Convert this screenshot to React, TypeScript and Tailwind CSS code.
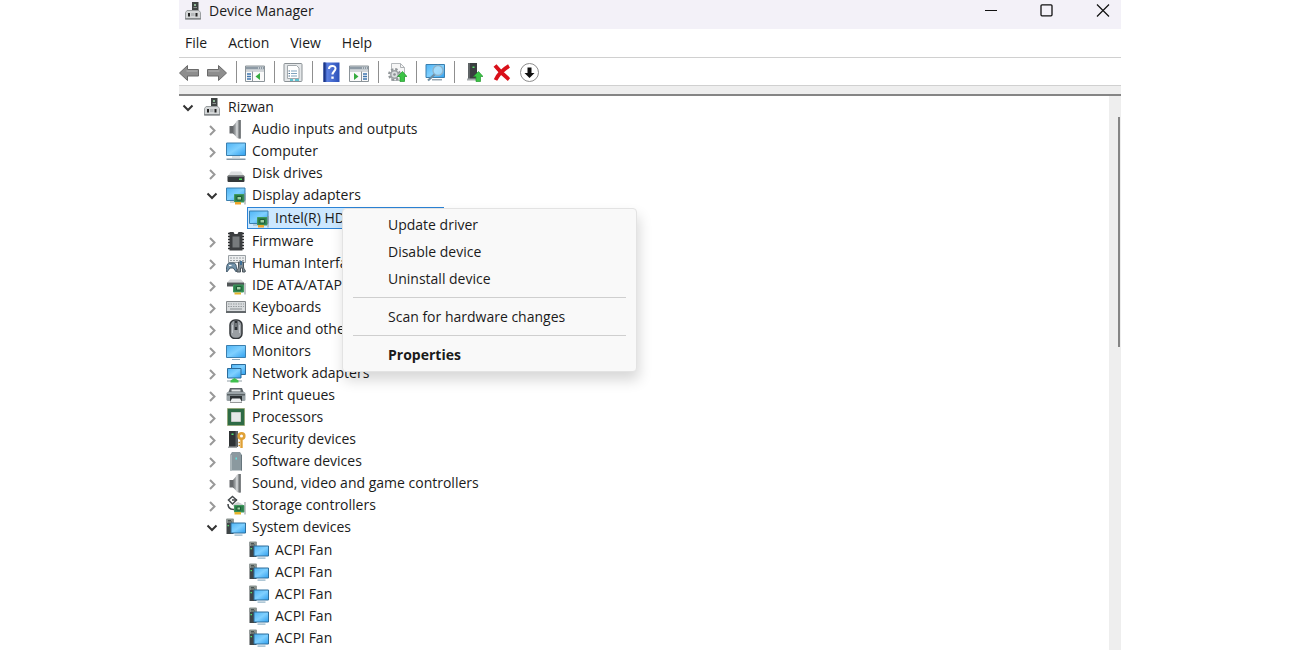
import React, { useState } from "react";

// icons

function Svg({ children }: any) {
  return (
    <svg viewBox="0 0 20 20" className="h-5 w-5 shrink-0" fill="none" aria-hidden="true">
      {children}
    </svg>
  );
}

function Gradients() {
  return (
    <svg className="absolute h-0 w-0" aria-hidden="true">
      <defs>
        <linearGradient id="screen" x1="0" y1="0" x2="1" y2="1">
          <stop offset="0" stopColor="#4fb4f5" />
          <stop offset="0.5" stopColor="#7fd0ff" />
          <stop offset="1" stopColor="#2f9fee" />
        </linearGradient>
        <linearGradient id="metal" x1="0" y1="0" x2="1" y2="0">
          <stop offset="0" stopColor="#6c6f72" />
          <stop offset="0.5" stopColor="#c4c8ca" />
          <stop offset="1" stopColor="#5c5f62" />
        </linearGradient>
        <linearGradient id="help" x1="0" y1="0" x2="1" y2="0">
          <stop offset="0" stopColor="#1f3f9c" />
          <stop offset="0.25" stopColor="#5b7fe0" />
          <stop offset="1" stopColor="#2b50b8" />
        </linearGradient>
      </defs>
    </svg>
  );
}

function RootIcon() {
  return (
    <Svg>
      <path d="M9 1h6.500v9H9z" fill="#3f4443" />
      <path d="M11 3h2v2h-2z" fill="#8fb897" />
      <path d="M10.500 6h3.500v1h-3.500z" fill="#8a8f8e" />
      <path d="M4 9.500h12l1.500 2v6.500H2.500v-6.500z" fill="#d3d6d7" stroke="#9a9ea0" />
      <path d="M5 12h2v3.500H5zM12.500 12h2v3.500h-2z" fill="#222" />
      <path d="M8 12h3.500v3H8z" fill="#b3b7b9" />
      <path d="M2 17h16v1.500H2z" fill="#85898b" />
    </Svg>
  );
}

function AudioIcon() {
  return (
    <Svg>
      <path d="M3.500 7H7v7.500H3.500z" fill="#66696c" />
      <path d="M7 7l5-6h2.500v18.500H12l-5-5z" fill="url(#metal)" />
      <path d="M11 2v16.500" stroke="#d5d8da" strokeWidth="1.200" />
      <path d="M14 1v18.500" stroke="#707477" strokeWidth="1.500" />
    </Svg>
  );
}

function ComputerIcon() {
  return (
    <Svg>
      <path d="M.500 2h19v12.500H.500z" fill="url(#screen)" stroke="#3b7fae" />
      <path d="M6 15.500h8v1H6z" fill="#b5c2cb" />
      <path d="M.500 17.500h19V19H.500z" fill="#8799a6" />
    </Svg>
  );
}

function DiskIcon() {
  return (
    <Svg>
      <path d="M5 8.500h10l3.500 5H1.500z" fill="#dcdedf" />
      <rect x="1.500" y="12.500" width="17" height="6.500" rx="1" fill="#34383a" />
      <path d="M2 13h16v1H2z" fill="#707577" />
      <path d="M13 15.500h3V17h-3z" fill="#49e052" />
    </Svg>
  );
}

function DisplayIcon() {
  return (
    <Svg>
      <path d="M.500 3h18.500v12.500H.500z" fill="url(#screen)" stroke="#3b7fae" />
      <path d="M4 16.500h4v1H4z" fill="#9ab0bd" />
      <path d="M8.500 9.500h9.500v7.500H8.500z" fill="#2c7f4c" stroke="#3f9a5c" />
      <path d="M11 11.500h4.500v3.500H11z" fill="#9ed0a4" stroke="#1d5c34" />
      <path d="M18.500 8h1v11.500h-1z" fill="#8a9296" />
      <path d="M9 17h6v2.500H9z" fill="#f0a52a" />
    </Svg>
  );
}

function FirmwareIcon() {
  return (
    <Svg>
      <path d="M3.500 1h4l1 2h3l1-2h4v18.500h-13z" fill="#3b3e40" />
      <path d="M6.500 5.500h7v11h-7z" fill="#777b7d" />
      <path
        d="M2 2.500h2M2 5.500h2M2 8.500h2M2 11.500h2M2 14.500h2M2 17.500h2M16 2.500h2M16 5.500h2M16 8.500h2M16 11.500h2M16 14.500h2M16 17.500h2"
        stroke="#2c2e30"
        strokeWidth="1.500"
      />
    </Svg>
  );
}

function HumanIcon() {
  return (
    <Svg>
      <path d="M2.500 2.500h17v7h-17z" fill="#eceeef" stroke="#9aa0a4" />
      <path d="M4 5h14M4 7.500h14" stroke="#9aa0a4" strokeDasharray="2 1" />
      <path d="M.800 19c-1-3 0-9 2.500-9h4.500c2.500 0 3.500 6 2.500 9l-3-4H4z" fill="#7393aa" stroke="#41586a" />
      <path d="M3 12.500h2.500" stroke="#fff" strokeWidth="1.200" />
      <path d="M11 19c-1-1 1.500-3 1.500-5V9h5v5c0 2 3 4 1.500 5h-2.500v-4h-2v4z" fill="#7f8b93" stroke="#4b555c" />
      <path d="M14 8h2v4h-2z" fill="#3d6f97" />
    </Svg>
  );
}

function IdeIcon() {
  return (
    <Svg>
      <path d="M4 4.500h11l3 3H1z" fill="#d5d7d8" />
      <path d="M1 7.500h17v4H1z" fill="#515658" />
      <path d="M7.500 10h10v7h-10z" fill="#2c7f4c" stroke="#3f9a5c" />
      <path d="M10.500 11.500H15V15h-4.500z" fill="#9ed0a4" stroke="#1d5c34" />
      <path d="M18.500 8h1v11.500h-1z" fill="#8a9296" />
      <path d="M8.500 17.500h6.500v2H8.500z" fill="#e5b52e" />
    </Svg>
  );
}

function KeyboardIcon() {
  return (
    <Svg>
      <path d="M.500 4.500h19v11H.500z" fill="#d8dbdd" stroke="#85898c" />
      <path d="M2 7h16M2 9.500h16" stroke="#979c9f" strokeDasharray="1.500 1" />
      <path d="M4 12h12" stroke="#8b9093" />
      <path d="M0 14h20v2H0z" fill="#63686b" />
    </Svg>
  );
}

function MouseIcon() {
  return (
    <Svg>
      <rect x="4" y="1" width="12" height="18.500" rx="5" fill="#9a9fa3" stroke="#33373a" strokeWidth="1.500" />
      <path d="M10 2v9" stroke="#2d3134" strokeWidth="3" />
      <path d="M10 4v4" stroke="#b4babd" />
      <path d="M6.500 6v8M13.500 6v8" stroke="#c5cacd" />
    </Svg>
  );
}

function MonitorIcon() {
  return (
    <Svg>
      <path d="M.500 4.500h19v12H.500z" fill="url(#screen)" stroke="#3b7fae" />
      <path d="M6 18h8v1H6z" fill="#8fa9b9" />
    </Svg>
  );
}

function NetworkIcon() {
  return (
    <Svg>
      <path d="M5.500 1.500h14v10h-14z" fill="url(#screen)" stroke="#2c6c9b" />
      <path d="M1.500 5.500h13.500v9.500H1.500z" fill="url(#screen)" stroke="#2c6c9b" />
      <path d="M1 17h15v2H1z" fill="#c7ced2" />
      <path d="M8.500 15l4 2.500v2h-8v-2z" fill="#3fc04d" />
    </Svg>
  );
}

function PrinterIcon() {
  return (
    <Svg>
      <path d="M4 3h12l2 5H2z" fill="#5f666a" />
      <path d="M5.500 4.500h9v2h-9z" fill="#dfe3e4" />
      <rect x=".5" y="7" width="19" height="9" rx="1.500" fill="#9aa3a7" />
      <path d="M1 9h18v1.500H1z" fill="#5b6265" />
      <path d="M4 11h12v6.500H4z" fill="#2c3133" />
      <path d="M6 13.500h8l2 3.500H4z" fill="#eef0f1" />
    </Svg>
  );
}

function ProcessorIcon() {
  return (
    <Svg>
      <path d="M1.500 1.500h17v17h-17z" fill="#2e6b45" />
      <path d="M1.500 1.500h17v17h-17z" stroke="#8d9a55" strokeDasharray="1 1" />
      <path d="M5.500 5.500h9v9h-9z" fill="#e6e8e8" stroke="#c3c9c5" />
    </Svg>
  );
}

function SecurityIcon() {
  return (
    <Svg>
      <path d="M3 2h8v16H3z" fill="#2f3335" />
      <path d="M9.500 2H12v16H9.500z" fill="#5b6163" />
      <path d="M5.500 4.500h2V6h-2z" fill="#54e070" />
      <path d="M2 17.500h9V19H2z" fill="#a2a6a8" />
      <circle cx="15.500" cy="7" r="2.800" stroke="#e0a136" strokeWidth="2.600" />
      <path d="M15.500 10v9" stroke="#e0a136" strokeWidth="2.400" />
      <path d="M14 13.500h-1.500M14 16.500h-1.500" stroke="#c98a22" strokeWidth="1.500" />
    </Svg>
  );
}

function SoftwareIcon() {
  return (
    <Svg>
      <path d="M4 4l2-3h8l2 3v15.500H4z" fill="#8b999f" />
      <path d="M4 4h2v15.500H4z" fill="#aab5b9" />
      <path d="M15 4h1v15.500h-1z" fill="#66757c" />
      <path d="M9.500 6.500h1.500v2H9.500z" fill="#5fe3e0" />
    </Svg>
  );
}

function StorageIcon() {
  return (
    <Svg>
      <path d="M6.500 1.500l4 3.500-4 4-4-4z" stroke="#44494c" strokeWidth="1.500" />
      <path d="M6 5h5M2 9c0 4 2 5.500 6 5.500" stroke="#44494c" strokeWidth="1.500" />
      <path d="M7 9.500l5-2.500 5 2.500v2H7z" fill="#c9cdcf" />
      <path d="M8.500 10.500h9.500v6.500H8.500z" fill="#2c7f4c" stroke="#3f9a5c" />
      <path d="M11 12h3.500v3H11z" fill="#9ed0a4" stroke="#1d5c34" />
      <path d="M18.500 7h1v12.500h-1z" fill="#8a9296" />
      <path d="M8.500 17h6.500v2.500H8.500z" fill="#e5b52e" />
    </Svg>
  );
}

function SystemIcon() {
  return (
    <Svg>
      <path d="M.500 2h7v15h-7z" fill="#3f4547" />
      <path d="M.500 1.500h7V6h-7z" fill="#8b9490" />
      <path d="M2 3.500h3M2 5h4" stroke="#4b5553" />
      <path d="M1.500 8H3v1.200H1.500z" fill="#4fe06b" />
      <path d="M5 6h14.500v10H5z" fill="url(#screen)" stroke="#2f6f9c" />
      <path d="M8.500 17.500h8v1.200h-8z" fill="#8fb0c4" />
    </Svg>
  );
}

// toolbar icons

function ArrowIcon({ flip }: any) {
  return (
    <Svg>
      <path
        d={flip ? "M19.500 11l-8-7.500v4H.500v6.500h11v4.500z" : "M.500 11l8-7.500v4h11v6.500h-11v4.500z"}
        fill="#8e8e8e"
        stroke="#6a6a6a"
        strokeLinejoin="round"
      />
      <path d={flip ? "M1.500 9h11" : "M7.500 9h11"} stroke="#b5b5b5" />
    </Svg>
  );
}

function PaneIcon({ right }: any) {
  return (
    <Svg>
      <path d="M.500 4h19v15.500H.500z" fill="#fafafa" stroke="#8c9499" />
      <path d="M1 4.500h18v3H1z" fill="#8d9aa5" />
      <path d="M13 6h1M15 6h1M17 6h1" stroke="#fff" />
      <path d="M1 9h18" stroke="#a9b1b7" />
      <path d={right ? "M12.500 9.500v9.500" : "M7.500 9.500v9.500"} stroke="#8c9499" />
      <path
        d={right ? "M14 12h4M14 14.500h4M14 17h4" : "M2 12h4M2 14.500h4M2 17h4"}
        stroke="#3e76ae"
        strokeWidth="1.300"
      />
      <path d={right ? "M5 11l4.500 3.500L5 18z" : "M15 11l-4.500 3.500L15 18z"} fill="#36ac3f" />
    </Svg>
  );
}

function PropertiesIcon() {
  return (
    <Svg>
      <rect x="1" y="1.500" width="18" height="18" rx="1" fill="#e4e7e9" stroke="#8b9195" />
      <path d="M4.500 3.500h9l2.500 2.500v10.500H4.500z" fill="#fff" stroke="#a2a8ac" />
      <path d="M8 9h6M8 11.500h6M8 14h6" stroke="#7fa3bd" />
      <path d="M5.500 9H7M5.500 11.500H7M5.500 14H7" stroke="#4c6f8b" />
      <path d="M7 18h3M12 18h4" stroke="#33b8c9" strokeWidth="1.500" />
    </Svg>
  );
}

function HelpIcon() {
  return (
    <Svg>
      <path d="M2.500 .500h16v19.500h-16z" fill="url(#help)" />
      <path d="M2.500 .500h2v19.500h-2z" fill="#1c3789" />
      <path
        d="M8 7c0-4 6.500-4 6.500-.5 0 2.500-3 3-3 6"
        stroke="#fff"
        strokeWidth="2"
      />
      <path d="M10.300 14.500h2.400v2.300h-2.400z" fill="#fff" />
    </Svg>
  );
}

function GreenUp() {
  return <path d="M15.500 9.500l4.500 5h-2.500v5h-4.500v-5h-2.500z" fill="#3bc445" stroke="#24982e" strokeWidth=".7" />;
}

function GearPageIcon() {
  return (
    <Svg>
      <path d="M4.500 1.500h9l4 4v13h-13z" fill="#f6f6f6" stroke="#b5b9bc" />
      <path d="M13.500 1.500v4h4" stroke="#adb1b4" />
      <circle cx="7.500" cy="12.500" r="5.200" stroke="#92979a" strokeWidth="2.500" strokeDasharray="2.300 1.800" />
      <circle cx="7.500" cy="12.500" r="3.700" fill="#dcdfe0" stroke="#9ca1a4" strokeWidth="1.500" />
      <circle cx="7.500" cy="12.500" r="1.300" fill="#8a8f92" />
      <GreenUp />
    </Svg>
  );
}

function ScanIcon() {
  return (
    <Svg>
      <path d="M1 2.500h18.500v13H1z" fill="url(#screen)" stroke="#3b7fae" />
      <path d="M7 17h10v1.500H7z" fill="#9aa9b3" />
      <circle cx="13" cy="8.500" r="5" fill="#b6e2fb" fillOpacity=".7" stroke="#8fb2c8" strokeWidth="1.300" />
      <path d="M9.500 12.500l-6.500 6" stroke="#6e8da2" strokeWidth="2.200" />
    </Svg>
  );
}

function UpdateIcon() {
  return (
    <Svg>
      <path d="M5 1h9v16.500H5z" fill="#3a3e40" />
      <path d="M5 1h2v16.500H5z" fill="#5f6466" />
      <path d="M9.500 4.500h2V6h-2z" fill="#5be06a" />
      <path d="M4 16.500h9v2H4z" fill="#a7abad" />
      <GreenUp />
    </Svg>
  );
}

function RemoveIcon() {
  return (
    <Svg>
      <path d="M4 3.500c4 5 9 10 14 14M18 4C12 7.500 7.500 12 4.500 18" stroke="#d9101a" strokeWidth="3.800" />
    </Svg>
  );
}

function DownIcon() {
  return (
    <Svg>
      <circle cx="10.500" cy="10.500" r="9" fill="#fff" stroke="#8d8d8d" />
      <path d="M10.500 16l-5-5h3V5.500h4V11h3z" fill="#111" />
    </Svg>
  );
}

function Chevron({ open }: any) {
  return (
    <svg viewBox="0 0 16 16" className="h-4 w-4" fill="none" aria-hidden="true">
      {open ? (
        <path d="M3.500 6.500L8 11l4.500-4.500" stroke="#333" strokeWidth="2" />
      ) : (
        <path d="M6 5l4.500 4.500L6 14" stroke="#999" strokeWidth="2" />
      )}
    </svg>
  );
}

// data

const categories = [
  { name: "Audio inputs and outputs", icon: AudioIcon },
  { name: "Computer", icon: ComputerIcon },
  { name: "Disk drives", icon: DiskIcon },
  { name: "Display adapters", icon: DisplayIcon, devices: ["Intel(R) HD Graphics"] },
  { name: "Firmware", icon: FirmwareIcon },
  { name: "Human Interface Devices", icon: HumanIcon },
  { name: "IDE ATA/ATAPI controllers", icon: IdeIcon },
  { name: "Keyboards", icon: KeyboardIcon },
  { name: "Mice and other pointing devices", icon: MouseIcon },
  { name: "Monitors", icon: MonitorIcon },
  { name: "Network adapters", icon: NetworkIcon },
  { name: "Print queues", icon: PrinterIcon },
  { name: "Processors", icon: ProcessorIcon },
  { name: "Security devices", icon: SecurityIcon },
  { name: "Software devices", icon: SoftwareIcon },
  { name: "Sound, video and game controllers", icon: AudioIcon },
  { name: "Storage controllers", icon: StorageIcon },
  {
    name: "System devices",
    icon: SystemIcon,
    devices: ["ACPI Fan", "ACPI Fan", "ACPI Fan", "ACPI Fan", "ACPI Fan"],
  },
];

const tools: any[] = [
  { label: "Back", icon: <ArrowIcon /> },
  { label: "Forward", icon: <ArrowIcon flip /> },
  null,
  { label: "Show/Hide Console Tree", icon: <PaneIcon /> },
  null,
  { label: "Properties", icon: <PropertiesIcon /> },
  null,
  { label: "Help", icon: <HelpIcon /> },
  { label: "Show/Hide Action Pane", icon: <PaneIcon right /> },
  null,
  { label: "Update driver", icon: <GearPageIcon /> },
  null,
  { label: "Scan for hardware changes", icon: <ScanIcon /> },
  null,
  { label: "Update device", icon: <UpdateIcon /> },
  { label: "Uninstall device", icon: <RemoveIcon /> },
  { label: "Disable device", icon: <DownIcon /> },
];

const menuGroups = [
  ["Update driver", "Disable device", "Uninstall device"],
  ["Scan for hardware changes"],
  ["Properties"],
];

function ContextMenu() {
  return (
    <div
      role="menu"
      className="absolute top-px left-[95px] z-10 w-[295px] rounded border border-[#e3e3e3] bg-[#f9f9f9] px-2.5 pt-0.5 pb-[3px] shadow-[2px_8px_14px_rgba(0,0,0,0.16)]"
    >
      {menuGroups.map((group, i) => (
        <React.Fragment key={i}>
          {i > 0 && <hr className="my-[5px] border-[#cfcfcf]" />}
          {group.map((item) => (
            <button
              key={item}
              role="menuitem"
              className={`block h-[27px] w-full pl-[35px] text-left hover:bg-[#f0f0f0] ${
                item === "Properties" ? "font-bold" : ""
              }`}
            >
              {item}
            </button>
          ))}
        </React.Fragment>
      ))}
    </div>
  );
}

function Category({ item }: any) {
  const [open, setOpen] = useState(!!item.devices);
  const Icon = item.icon;

  return (
    <li role="treeitem" aria-expanded={open}>
      <div className="flex h-[22px] items-center gap-1.5">
        <button aria-label={item.name} onClick={() => setOpen(!open)}>
          <Chevron open={open} />
        </button>
        <Icon />
        <span>{item.name}</span>
      </div>

      {open && item.devices && (
        <ul role="group" className="py-px pl-[43px]">
          {item.devices.map((device: string, i: number) =>
            device === "ACPI Fan" ? (
              <li key={i} role="treeitem" className="flex h-[22px] items-center gap-1.5 pl-0.5">
                <SystemIcon />
                <span>{device}</span>
              </li>
            ) : (
              <li key={i} role="treeitem" aria-selected="true" className="relative w-[197px]">
                <div className="flex h-[22px] items-center gap-1.5 border border-[#2b83d6] bg-[#cce8ff] pl-px">
                  <DisplayIcon />
                  <span>{device}</span>
                </div>
                <ContextMenu />
              </li>
            )
          )}
        </ul>
      )}
    </li>
  );
}


export default function App() {
  return (
    <div className="h-screen overflow-hidden bg-white">
      <Gradients />
      <div className="mx-auto flex h-full w-full max-w-[942px] flex-col font-['Open_Sans',sans-serif] text-sm whitespace-nowrap text-[#1b1b1b]">

        <header className="flex h-[29px] shrink-0 items-center justify-between bg-[#f3f1f8] pb-2">
          <div className="flex items-center gap-1.5 pl-1">
            <RootIcon />
            <h1>Device Manager</h1>
          </div>
          <div className="flex gap-5">
            <button aria-label="Minimize" className="flex w-9 justify-center">
              <svg viewBox="0 0 14 14" className="h-3.5 w-3.5" stroke="#111" fill="none">
                <path d="M1 6.500h12" />
              </svg>
            </button>
            <button aria-label="Maximize" className="flex w-9 justify-center">
              <svg viewBox="0 0 14 14" className="h-3.5 w-3.5" stroke="#111" fill="none">
                <rect x="1" y=".8" width="11" height="11" rx="1" strokeWidth="1.300" />
              </svg>
            </button>
            <button aria-label="Close" className="flex w-9 justify-center">
              <svg viewBox="0 0 14 14" className="h-3.5 w-3.5" stroke="#111" fill="none">
                <path d="M1 .500l12 12M13 .500l-12 12" strokeWidth="1.200" />
              </svg>
            </button>
          </div>
        </header>

        <nav className="flex h-7 shrink-0 items-center gap-[21px] pl-1.5">
          <button>File</button>
          <button>Action</button>
          <button>View</button>
          <button>Help</button>
        </nav>

        <div role="toolbar" className="flex h-[29px] shrink-0 items-center gap-2 border-y border-[#d0d0d0]">
          {tools.map((tool, i) =>
            tool ? (
              <button key={i} aria-label={tool.label}>
                {tool.icon}
              </button>
            ) : (
              <span key={i} className="flex h-[22px] w-0.5 justify-end">
                <span className="w-px bg-[#8f8f8f]" />
              </span>
            )
          )}
        </div>
        <div className="h-2.5 shrink-0 border-b-2 border-[#858585] bg-[#eeeeee]" />

        <main className="flex min-h-0 flex-1">
          <ul role="tree" className="flex-1 overflow-hidden pl-px">
            <li role="treeitem" aria-expanded="true">
              <div className="flex h-[22px] items-center gap-1.5">
                <button aria-label="Rizwan">
                  <Chevron open />
                </button>
                <RootIcon />
                <span>Rizwan</span>
              </div>
              <ul role="group" className="pl-6">
                {categories.map((item) => (
                  <Category key={item.name} item={item} />
                ))}
              </ul>
            </li>
          </ul>

          {/* scrollbar */}
          <div className="flex w-3 justify-end bg-[#eeeeee] pt-[21px] pr-px">
            <div className="h-[230px] w-0.5 bg-[#858585]" />
          </div>
        </main>

      </div>
    </div>
  );
}
